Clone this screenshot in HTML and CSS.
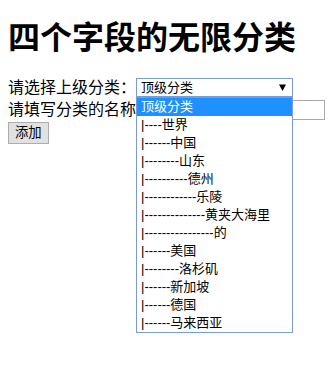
FILE: index.html
```html
<!DOCTYPE html>
<html lang="zh-CN">
<head>
    <meta charset="UTF-8">
    <meta name="viewport" content="width=device-width, initial-scale=1.0">
    <title>四个字段的无限分类</title>
    <link rel="stylesheet" href="styles.css">
</head>
<body>
<h1>四个字段的无限分类</h1>
<form class="cate-form">
    <div class="row">
        <label>请选择上级分类：</label>
        <div class="picker">
            <div class="select">
                <span>顶级分类</span>
                <svg class="arrow" width="7" height="7" viewBox="0 0 7 7"><polygon points="0,0.5 7,0.5 3.5,7" fill="#000"/></svg>
            </div>
            <ul class="options">
                <li class="active">顶级分类</li>
                <li>|----世界</li>
                <li>|------中国</li>
                <li>|--------山东</li>
                <li>|----------德州</li>
                <li>|------------乐陵</li>
                <li>|--------------黄夹大海里</li>
                <li>|----------------的</li>
                <li>|------美国</li>
                <li>|--------洛杉矶</li>
                <li>|------新加坡</li>
                <li>|------德国</li>
                <li>|------马来西亚</li>
            </ul>
        </div>
    </div>
    <div class="row row-name">
        <label>请填写分类的名称：</label>
        <input class="name-input" type="text">
    </div>
    <button class="add-btn" type="button">添加</button>
</form>
</body>
</html>
```

FILE: styles.css
```css
html {
    min-height: 100%;
}

body {
    margin: 8px;
    min-height: calc(100vh - 16px);
    font-family: "Liberation Sans", "Noto Sans CJK SC", sans-serif;
    font-size: 16px;
    color: #000;
    background: #fff;
}

h1 {
    margin: 14px 0 24px;
    font-size: 32px;
    line-height: 32px;
    font-weight: bold;
}

.row {
    display: flex;
    align-items: center;
    height: 20px;
}

.row-name {
    height: 22px;
    margin-top: 1px;
}

label {
    line-height: 16px;
}

.picker {
    position: relative;
}

.select {
    box-sizing: border-box;
    width: 157px;
    height: 19px;
    margin-top: -1px;
    border: 1px solid #7a9cd6;
    padding: 0 6px 0 4px;
    display: flex;
    align-items: center;
    justify-content: space-between;
    font-size: 13px;
    line-height: 17px;
    background: #fff;
}

.arrow {
    display: block;
}

.options {
    position: absolute;
    top: 18px;
    left: 0;
    z-index: 2;
    box-sizing: border-box;
    width: 157px;
    margin: 0;
    padding: 0;
    list-style: none;
    border: 1px solid #7a9cd6;
    background: #fff;
    font-size: 13px;
    line-height: 18px;
}

.options li {
    height: 18px;
    padding-left: 4px;
    white-space: nowrap;
}

.options .active {
    background: #1e90ff;
    color: #fff;
}

.name-input {
    box-sizing: border-box;
    width: 173px;
    height: 20px;
    margin: 0;
    border: 1px solid #a9a9a9;
    padding: 0 2px;
}

.add-btn {
    box-sizing: border-box;
    height: 22px;
    margin-top: 1px;
    padding: 0 6px;
    border: 1px solid #adadad;
    border-radius: 0;
    background: #e1e1e1;
    font-family: "Liberation Sans", "Noto Sans CJK SC", sans-serif;
    font-size: 13.33px;
    line-height: 18px;
    color: #000;
}
```
